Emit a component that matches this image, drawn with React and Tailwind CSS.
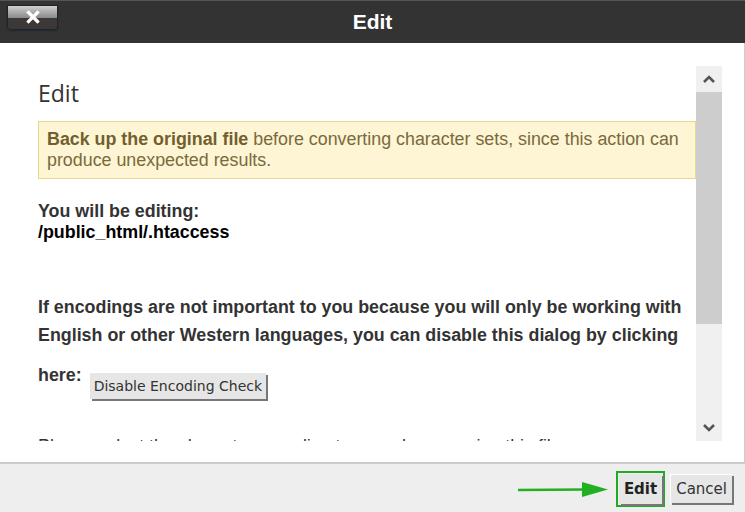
export default function App() {
  const sans = { fontFamily: '"Liberation Sans", Arial, sans-serif' };
  return (
    <div className="w-[745px] h-[512px] flex flex-col bg-white overflow-hidden" style={sans}>
      {/* Header */}
      <div className="h-[43px] bg-[#333333] border-t border-[#555] relative flex items-center justify-center shrink-0">
        <div className="absolute left-[7px] top-[4px] w-[51px] h-[25px] rounded-b-[4px] overflow-hidden flex flex-col shadow-[0_1px_2px_#1a2a33] border border-[#222]">
          <div className="h-[12px] bg-gradient-to-b from-[#d0d0d0] to-[#8a8a8a]"></div>
          <div className="flex-1 bg-[#3d3838]"></div>
          <svg className="absolute left-[18px] top-[4px]" width="14" height="14" viewBox="0 0 14 14">
            <path d="M2.5 2.5 L11.5 11.5 M11.5 2.5 L2.5 11.5" stroke="#fff" strokeWidth="3.2" strokeLinecap="square" />
          </svg>
        </div>
        <span className="text-white font-bold text-[21px]">Edit</span>
      </div>

      {/* Body */}
      <div className="h-[419px] shrink-0 border-r border-[#cccccc] pt-[23px] flex">
        <div className="w-[696px] h-[375px] overflow-hidden pl-[38px]">
          <h1 className="text-[23px] text-[#333] mt-[12px] leading-[30px]" style={{ fontFamily: '"Open Sans", sans-serif' }}>Edit</h1>
          <div className="mt-[13px] bg-[#fdf5d3] border border-[#e6d98c] px-[8px] pt-[7px] pb-[7px] text-[17.85px] leading-[21px] text-[#7a6a3d]">
            <b className="text-[#725f2f]">Back up the original file</b> before converting character sets, since this action can produce unexpected results.
          </div>
          <div className="mt-[22px] text-[17.85px] font-bold leading-[21px]">
            <div className="text-[#333]">You will be editing:</div>
            <div className="text-black">/public_html/.htaccess</div>
          </div>
          <div className="mt-[50px] text-[17.85px] font-bold leading-[28px] text-[#333] pr-[4px]">
            If encodings are not important to you because you will only be working with English or other Western languages, you can disable this dialog by clicking
          </div>
          <div className="mt-[14px] flex items-start text-[17.85px] font-bold text-[#333]">
            <span className="leading-[24px]">here:</span>
            <button className="ml-[8px] mt-[10px] h-[26px] px-[4px] bg-[#e6e6e6] text-[#333] font-normal leading-[24px] shadow-[2px_2px_0_#777]" style={{ fontFamily: '"DejaVu Sans", sans-serif', fontSize: '14px' }}>
              Disable Encoding Check
            </button>
          </div>
          <div className="mt-[37px] text-[17.85px] text-[#333] leading-[20px] whitespace-nowrap">
            Please select the character encoding to use when opening this file...
          </div>
        </div>
        {/* Scrollbar */}
        <div className="w-[26px] h-[375px] bg-[#f0f0f0] flex flex-col">
          <div className="h-[26px] flex items-center justify-center">
            <svg width="14" height="10" viewBox="0 0 14 10">
              <path d="M2 8 L7 3 L12 8" stroke="#555" strokeWidth="2.6" fill="none" />
            </svg>
          </div>
          <div className="h-[232px] bg-[#cdcdcd]"></div>
          <div className="flex-1"></div>
          <div className="h-[26px] flex items-center justify-center">
            <svg width="14" height="10" viewBox="0 0 14 10">
              <path d="M2 2 L7 7 L12 2" stroke="#555" strokeWidth="2.6" fill="none" />
            </svg>
          </div>
        </div>
      </div>

      {/* Footer */}
      <div className="flex-1 bg-[#eeeeee] border-t-2 border-[#cccccc] relative flex items-start justify-end pr-[13px] pt-[7px]">
        <svg className="absolute left-[516px] top-[16px]" width="94" height="20" viewBox="0 0 94 20">
          <path d="M2 10 L70 9.5" stroke="#22b022" strokeWidth="2.5" />
          <path d="M66 2 L92 9.5 L66 17 Z" fill="#22b022" />
        </svg>
        <div className="border-2 border-[#22aa22] p-[1px] mr-[5px]">
          <button className="h-[30px] px-[5px] bg-[#e6e6e6] text-[#222] font-bold shadow-[2px_2px_0_#777]" style={{ fontFamily: '"DejaVu Sans", sans-serif', fontSize: '15px' }}>
            Edit
          </button>
        </div>
        <button className="mt-[3px] h-[29px] px-[5px] bg-[#e6e6e6] text-[#333] shadow-[2px_2px_0_#777] border-t border-l border-white" style={{ fontFamily: '"DejaVu Sans", sans-serif', fontSize: '15px' }}>
          Cancel
        </button>
      </div>
    </div>
  );
}
